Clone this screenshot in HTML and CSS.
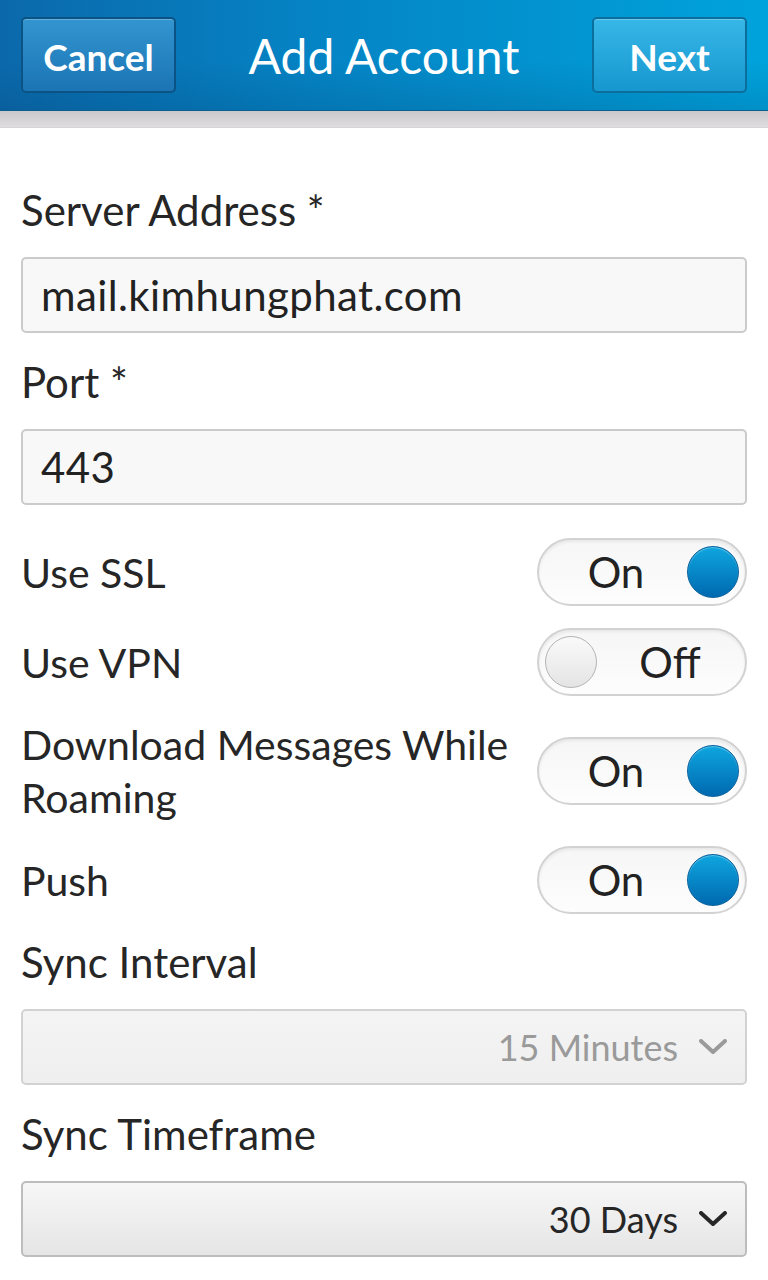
FILE: index.html
```html
<!DOCTYPE html>
<html>
<head>
<title>Add Account</title>
<meta charset='utf-8'/>
<link rel="stylesheet" href="styles.css">
</head>
<body>
<div class="screen">
	<header class="titlebar">
		<button class="tb-btn cancel">Cancel</button>
		<h1 class="title">Add Account</h1>
		<button class="tb-btn next">Next</button>
	</header>
	<div class="title-shadow"></div>

	<form class="form">
		<div class="field">
			<label class="field-label">Server Address *</label>
			<div class="text-input">mail.kimhungphat.com</div>
		</div>
		<div class="field">
			<label class="field-label">Port *</label>
			<div class="text-input">443</div>
		</div>

		<div class="toggles">
			<div class="toggle-row">
				<span class="row-label">Use SSL</span>
				<div class="toggle on"><span class="toggle-text">On</span><span class="knob"></span></div>
			</div>
			<div class="toggle-row">
				<span class="row-label">Use VPN</span>
				<div class="toggle off"><span class="knob"></span><span class="toggle-text">Off</span></div>
			</div>
			<div class="toggle-row">
				<span class="row-label">Download Messages While Roaming</span>
				<div class="toggle on"><span class="toggle-text">On</span><span class="knob"></span></div>
			</div>
			<div class="toggle-row">
				<span class="row-label">Push</span>
				<div class="toggle on"><span class="toggle-text">On</span><span class="knob"></span></div>
			</div>
		</div>

		<div class="field after-toggles">
			<label class="field-label">Sync Interval</label>
			<div class="dropdown disabled">
				<span class="dd-value">15 Minutes</span>
				<svg class="chevron" width="28" height="16" viewBox="0 0 28 16"><polyline points="2,2 14,13 26,2" fill="none" stroke="currentColor" stroke-width="4" stroke-linecap="round" stroke-linejoin="round"/></svg>
			</div>
		</div>
		<div class="field">
			<label class="field-label">Sync Timeframe</label>
			<div class="dropdown">
				<span class="dd-value">30 Days</span>
				<svg class="chevron" width="28" height="16" viewBox="0 0 28 16"><polyline points="2,2 14,13 26,2" fill="none" stroke="currentColor" stroke-width="4" stroke-linecap="round" stroke-linejoin="round"/></svg>
			</div>
		</div>
	</form>
</div>
</body>
</html>
```
FILE: styles.css
```css
* {
	box-sizing: border-box;
}
body {
	margin: 0;
	background: #fff;
	font-family: Lato, "Open Sans", sans-serif;
	color: #262626;
}
.screen {
	width: 768px;
	height: 1280px;
	overflow: hidden;
}

/* title bar */
.titlebar {
	height: 111px;
	padding: 17px 21px 18px;
	display: flex;
	align-items: center;
	justify-content: space-between;
	background:
		linear-gradient(to bottom, rgba(255,255,255,0) 55%, rgba(0,40,80,0.15) 100%),
		linear-gradient(to right, #0b69ab 0%, #0583c4 40%, #00a3dc 100%);
	border-bottom: 1px solid #0a5f8f;
}
.title {
	margin: 0;
	font-size: 48px;
	font-weight: 400;
	color: #fff;
	line-height: 1;
	padding-top: 3px;
}
.tb-btn {
	width: 155px;
	height: 76px;
	border-radius: 5px;
	font-family: Lato, "Open Sans", sans-serif;
	font-size: 37px;
	font-weight: 700;
	color: #fff;
	padding: 3px 0 0;
	box-shadow: inset 0 1px 0 rgba(255,255,255,0.25);
}
.tb-btn.cancel {
	background: linear-gradient(#3395d0, #1b74b4);
	border: 2px solid #0c5385;
}
.tb-btn.next {
	background: linear-gradient(#37b7e7, #1697cf);
	border: 2px solid #0b6e9c;
}
.title-shadow {
	height: 17px;
	background: linear-gradient(#cbc8cb, #e0dde0);
	border-bottom: 1px solid #d6d6d6;
}

/* form */
.form {
	padding: 33px 21px 0;
}
.field-label {
	display: block;
	font-size: 42px;
	line-height: 52px;
	padding: 23px 0 21px;
}
.field.after-toggles .field-label {
	padding-top: 11px;
}
.text-input {
	height: 76px;
	border: 2px solid #cbcbcb;
	border-radius: 5px;
	background: #f8f8f8;
	font-size: 42px;
	letter-spacing: 0.4px;
	line-height: 72px;
	padding: 0 18px;
	color: #222;
}

/* toggles */
.toggles {
	padding-top: 22px;
}
.toggle-row {
	display: flex;
	align-items: center;
	justify-content: space-between;
	padding: 11px 0;
	min-height: 90px;
}
.row-label {
	font-size: 41px;
	line-height: 53px;
	max-width: 500px;
}
.toggle {
	flex: none;
	width: 210px;
	height: 68px;
	border: 2px solid #d2d2d2;
	border-radius: 34px;
	background: linear-gradient(#f6f6f6, #fdfdfd);
	box-shadow: inset 0 2px 3px rgba(0,0,0,0.06);
	display: flex;
	align-items: center;
	padding: 0 6px;
}
.toggle-text {
	flex: 1;
	text-align: center;
	font-size: 42px;
	color: #222;
}
.toggle.off .toggle-text {
	padding-left: 4px;
}
.knob {
	width: 52px;
	height: 52px;
	border-radius: 50%;
	flex: none;
}
.toggle.on .knob {
	background: linear-gradient(#0ea6df, #0069b0);
	border: 1px solid #07609c;
	box-shadow: inset 0 1px 1px rgba(255,255,255,0.35);
}
.toggle.off .knob {
	background: linear-gradient(#fafafa, #e4e4e4);
	border: 1px solid #b4b4b4;
}

/* dropdowns */
.dropdown {
	height: 76px;
	border: 2px solid #bdbdbd;
	border-radius: 5px;
	background: linear-gradient(#f7f7f7, #e5e5e5);
	display: flex;
	align-items: center;
	justify-content: flex-end;
	padding: 0 18px 0 0;
	color: #262626;
}
.dropdown.disabled {
	background: linear-gradient(#f4f4f4, #efefef);
	border-color: #d2d2d2;
	color: #9a9a9a;
}
.dd-value {
	font-size: 36px;
	margin-right: 21px;
}
.chevron {
	display: block;
}
```
